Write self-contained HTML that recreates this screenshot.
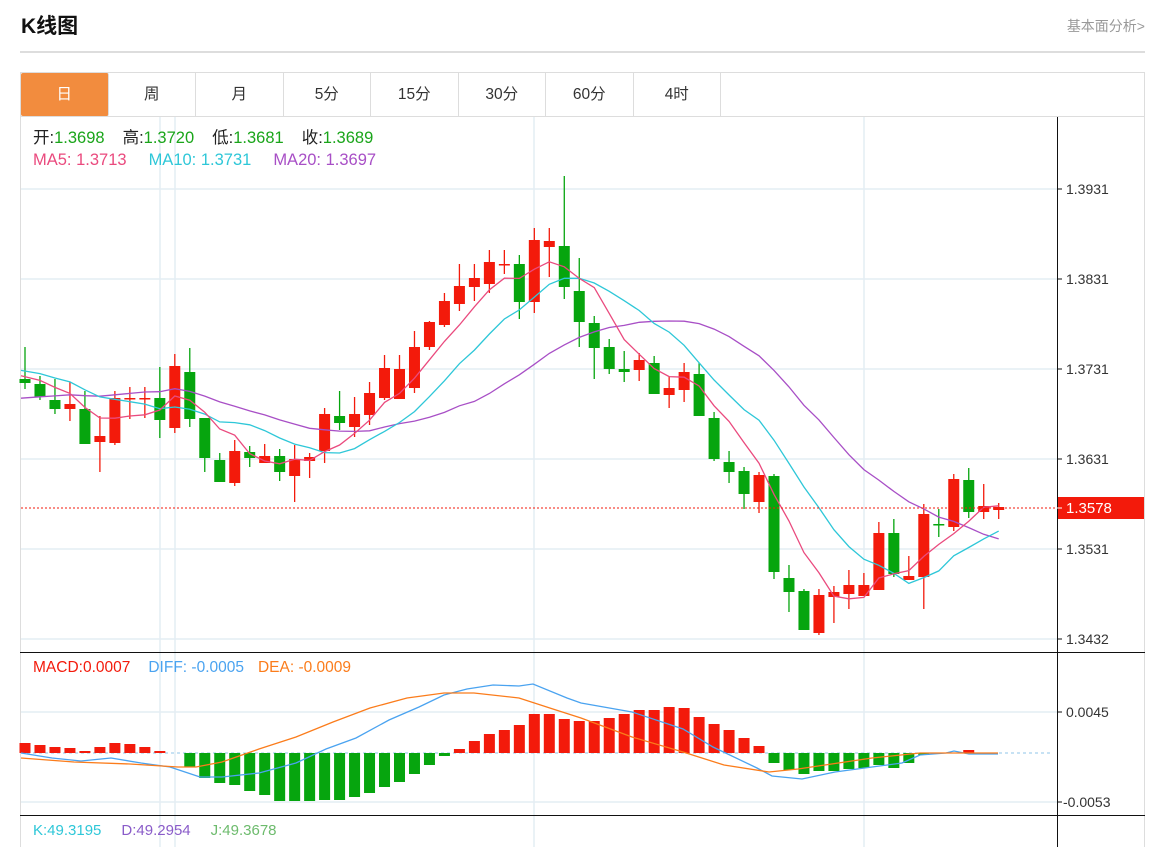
<!DOCTYPE html>
<html><head><meta charset="utf-8">
<style>
*{margin:0;padding:0;box-sizing:border-box}
html,body{width:1156px;height:847px;overflow:hidden}
body{background:#fff;position:relative;font-family:"Liberation Sans","Noto Sans CJK SC",sans-serif}
.t{position:absolute;left:21px;top:10px;font-size:21px;font-weight:bold;color:#111}
.r{position:absolute;right:11px;top:16px;font-size:14px;color:#999}
.hl{position:absolute;left:20px;top:51px;width:1125px;height:2px;background:#ddd}
.box{position:absolute;left:20px;top:72px;width:1125px;height:790px;border:1px solid #ddd}
.tabs{position:absolute;left:21px;top:73px;height:43px;display:flex}
.tabs div{width:87.5px;height:43px;border-right:1px solid #ddd;text-align:center;line-height:43px;font-size:15.5px;color:#333}
.tabs div.a{background:#f28c3e;color:#fff;border-radius:2px}
.tb{position:absolute;left:21px;top:116px;width:1123px;height:1px;background:#ddd}
svg{position:absolute;left:0;top:0}
</style></head><body>
<div class="t">K线图</div>
<div class="r">基本面分析&gt;</div>
<div class="hl"></div>
<div class="box"></div>
<div class="tabs"><div class="a">日</div><div>周</div><div>月</div><div>5分</div><div>15分</div><div>30分</div><div>60分</div><div>4时</div></div>
<div class="tb"></div>
<svg id="s" width="1156" height="847" xmlns="http://www.w3.org/2000/svg"></svg>
<script>
var C=[
[379,383,347,389,0],[384,397,376,400,0],[400,409,379,414,0],[404,409,382,421,1],[409,444,391,444,0],
[436,442,416,472,1],[398,443,391,445,1],[398,399,387,419,1],[398,399,387,418,1],[398,420,367,438,0],
[366,428,354,433,1],[372,419,348,427,0],[418,458,418,472,0],[460,482,453,482,0],[451,483,440,486,1],
[452,458,446,467,0],[456,463,444,463,1],[456,472,449,481,0],[459,476,445,502,1],[457,461,453,478,1],
[414,451,408,463,1],[416,423,391,430,0],[414,427,397,437,1],[393,415,382,425,1],[368,398,355,400,1],
[369,399,355,399,1],[347,388,331,393,1],[322,347,321,350,1],[301,325,293,327,1],[286,304,264,311,1],
[278,287,264,301,1],[262,284,250,293,1],[264,265,250,274,1],[264,302,255,319,0],[240,302,228,313,1],
[241,247,228,277,1],[246,287,176,299,0],[291,322,258,347,0],[323,348,316,379,0],[347,369,339,374,0],
[369,372,351,382,0],[360,370,353,381,1],[363,394,356,394,0],[388,395,376,408,1],[372,390,363,402,1],
[374,416,363,416,0],[418,459,412,461,0],[462,472,451,483,0],[471,494,467,509,0],[475,502,472,513,1],
[476,572,474,579,0],[578,592,565,612,0],[591,630,589,630,0],[595,633,589,635,1],[592,597,586,623,1],
[585,594,570,609,1],[585,596,573,596,1],[533,590,522,590,1],[533,574,519,577,0],[576,580,556,580,1],
[514,577,504,609,1],[524,525,509,537,0],[479,527,474,531,1],[480,512,468,518,0],[506,512,484,519,1],[507,510,503,519,1]];
var M=[-10,-8,-6,-5,-2,-6,-10,-9,-6,-2,0,14,25,30,32,38,42,48,48,48,47,47,44,40,34,29,21,12,3,-4,-12,-19,-23,-28,-39,-39,-34,-32,-32,-35,-39,-43,-43,-46,-45,-36,-29,-23,-15,-7,10,17,21,18,18,16,15,12,15,10,2,0,0,-3,0,0];
var X=function(i){return 25+14.98*i};
var s='';
var gl='#e4edf3';
[189,279,369,459,549,639,712,802].forEach(function(y){s+='<line x1="21" x2="1057" y1="'+y+'" y2="'+y+'" stroke="'+gl+'" stroke-width="1.5"/>';});
[160,175,534,864].forEach(function(x){s+='<line x1="'+x+'" x2="'+x+'" y1="117" y2="847" stroke="'+gl+'" stroke-width="1.5"/>';});
var cl=C.map(function(c){return c[4]?c[0]:c[1];});
var pad=[426,426,426,426,426,426,426,426,426,426,365,365,365,365,365,374,374,374,374];
var all=pad.concat(cl);
function ma(n){var p=[];for(var i=0;i<cl.length;i++){var k=i+19,sm=0;for(var j=0;j<n;j++)sm+=all[k-j];p.push((i==0?21:X(i))+','+(sm/n).toFixed(1));}return p.join(' ');}
C.forEach(function(c,i){var x=X(i),col=c[4]?'#f31a0b':'#06a50e';
s+='<line x1="'+x+'" x2="'+x+'" y1="'+c[2]+'" y2="'+c[3]+'" stroke="'+col+'" stroke-width="1.3"/>';
var h=Math.max(c[1]-c[0],1.5);s+='<rect x="'+(x-5.5)+'" y="'+c[0]+'" width="11" height="'+h+'" fill="'+col+'"/>';});
s+='<polyline fill="none" stroke="#a84fc6" stroke-width="1.3" points="'+ma(20)+'"/>';
s+='<polyline fill="none" stroke="#2ec7d8" stroke-width="1.3" points="'+ma(10)+'"/>';
s+='<polyline fill="none" stroke="#ea4a7e" stroke-width="1.3" points="'+ma(5)+'"/>';
s+='<line x1="21" x2="1057" y1="508" y2="508" stroke="#f31a0b" stroke-dasharray="2,2" stroke-width="1"/>';
s+='<line x1="21" x2="1053" y1="753" y2="753" stroke="#8fc6e8" stroke-dasharray="3,3" stroke-width="1"/>';
M.forEach(function(v,i){if(!v)return;var x=X(i);var col=v<0?'#f31a0b':'#06a50e';var y=v<0?753+v:753;s+='<rect x="'+(x-5.5)+'" y="'+y+'" width="11" height="'+Math.abs(v)+'" fill="'+col+'"/>';});
s+='<polyline fill="none" stroke="#4aa3f0" stroke-width="1.3" points="21,753 52,758 81,761 111,758 141,763 170,767 185,772 200,777 222,777 259,773 296,763 326,749 356,738 389,720 419,707 444,695 467,689 493,685 519,686 533,684 567,698 581,703 632,712 683,729 713,747 757,768 772,776 802,779 835,772 872,767 902,763 920,755 946,753 954,751 969,754 998,754"/>';
s+='<polyline fill="none" stroke="#fb7c1b" stroke-width="1.3" points="21,758 74,762 130,764 178,767 196,767 222,762 259,749 296,737 333,722 370,708 407,698 444,693 474,693 519,698 556,710 581,718 632,737 683,752 724,765 769,772 798,769 872,758 920,753 998,753"/>';
s+='<line x1="20" x2="1145" y1="652.5" y2="652.5" stroke="#111" stroke-width="1"/>';
s+='<line x1="20" x2="1145" y1="815.5" y2="815.5" stroke="#111" stroke-width="1"/>';
s+='<line x1="1057.5" x2="1057.5" y1="117" y2="847" stroke="#111" stroke-width="1"/>';
var lab=[[189,'1.3931'],[279,'1.3831'],[369,'1.3731'],[459,'1.3631'],[549,'1.3531'],[639,'1.3432'],[712,'0.0045'],[802,'-0.0053']];
lab.forEach(function(l){s+='<line x1="1057" x2="1062" y1="'+l[0]+'" y2="'+l[0]+'" stroke="#111"/><text x="'+(l[1][0]=='-'?1063:1066)+'" y="'+(l[0]+5)+'" font-size="14" fill="#333" font-family="Liberation Sans,sans-serif">'+l[1]+'</text>';});
s+='<rect x="1058" y="497" width="86" height="22" fill="#f31a0b"/><line x1="1057" x2="1062" y1="508" y2="508" stroke="#fff"/><text x="1066" y="513" font-size="15" fill="#fff" font-family="Liberation Sans,sans-serif">1.3578</text>';
var F='font-family="Liberation Sans,Noto Sans CJK SC,sans-serif"';
s+='<text x="33" y="143" font-size="16.5" '+F+'><tspan fill="#222">开:</tspan><tspan fill="#1aa51a">1.3698</tspan><tspan fill="#222" dx="18">高:</tspan><tspan fill="#1aa51a">1.3720</tspan><tspan fill="#222" dx="18">低:</tspan><tspan fill="#1aa51a">1.3681</tspan><tspan fill="#222" dx="18">收:</tspan><tspan fill="#1aa51a">1.3689</tspan></text>';
s+='<text x="33" y="165" font-size="16.5" '+F+'><tspan fill="#ea4a7e">MA5: 1.3713</tspan><tspan fill="#2ec7d8" dx="22">MA10: 1.3731</tspan><tspan fill="#a84fc6" dx="22">MA20: 1.3697</tspan></text>';
s+='<text x="33" y="672" font-size="15.5" '+F+'><tspan fill="#f31a0b">MACD:0.0007</tspan><tspan fill="#4aa3f0" dx="18">DIFF: -0.0005</tspan><tspan fill="#fb7c1b" dx="14">DEA: -0.0009</tspan></text>';
s+='<text x="33" y="835" font-size="15" '+F+'><tspan fill="#2ec7d8">K:49.3195</tspan><tspan fill="#8a5cc9" dx="20">D:49.2954</tspan><tspan fill="#6dbb6d" dx="20">J:49.3678</tspan></text>';
document.getElementById('s').innerHTML=s;
</script>
</body></html>
